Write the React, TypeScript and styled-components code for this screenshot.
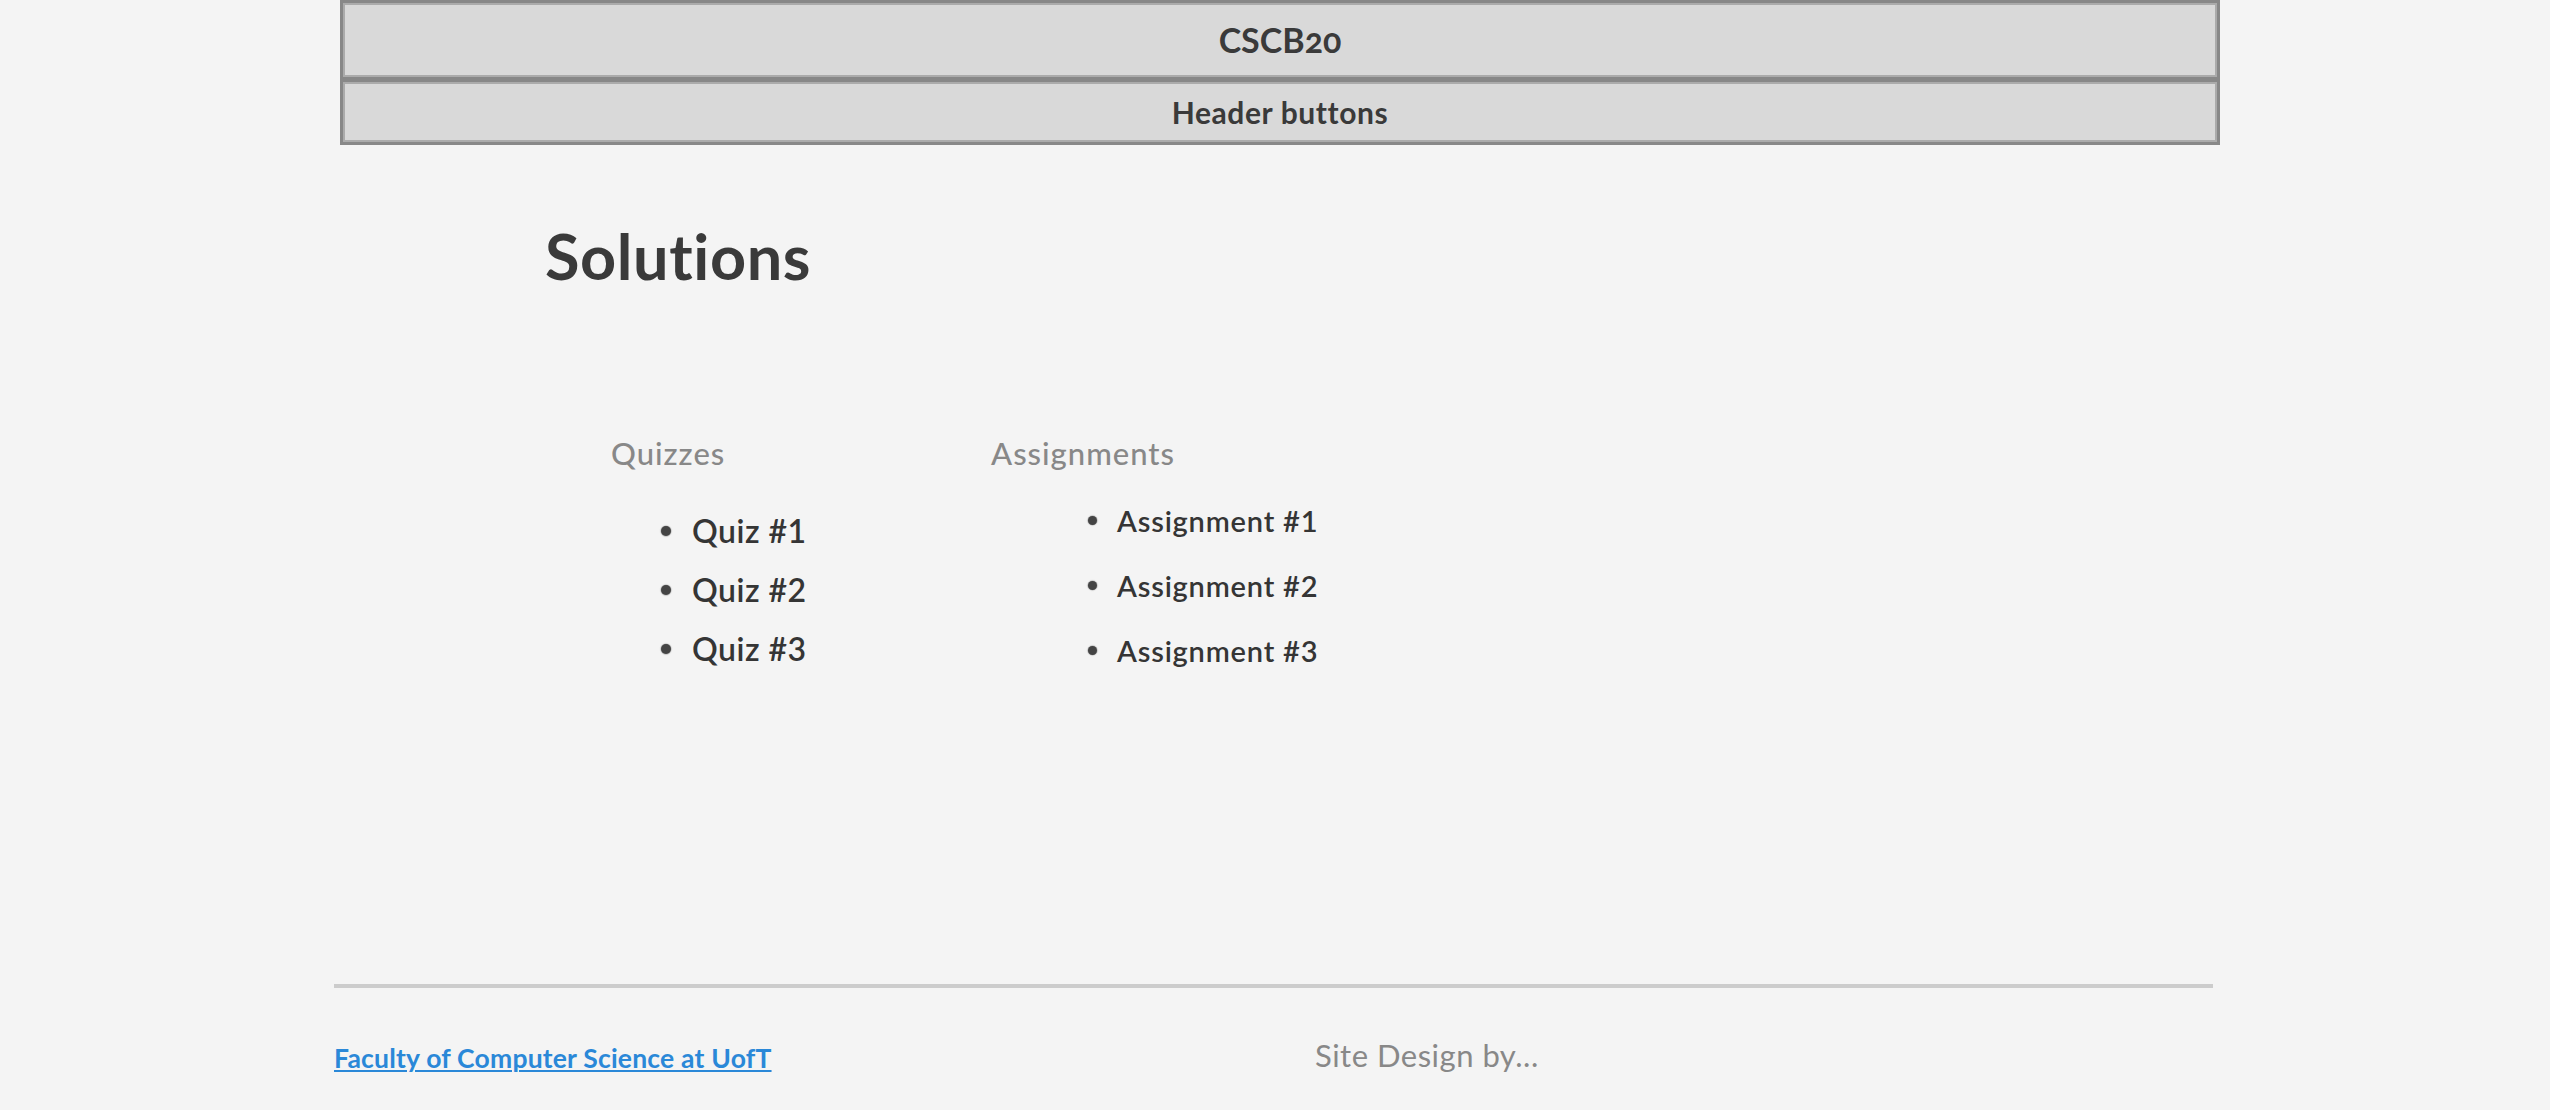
import React from "react";
import styled, { createGlobalStyle } from "styled-components";

const GlobalStyle = createGlobalStyle`
  html, body {
    margin: 0;
    padding: 0;
    background: #f4f4f4;
  }
  body {
    font-family: "Lato", "Open Sans", sans-serif;
    color: #3a3a3a;
    font-variant-ligatures: none;
  }
`;

const Page = styled.div`
  width: 2550px;
  min-height: 1110px;
  background: #f4f4f4;
  display: flex;
  flex-direction: column;
`;

const HeaderBar = styled.header`
  margin-left: 340px;
  width: 1880px;
  box-sizing: border-box;
  background: #888888;
  padding: 3px;
  display: flex;
  flex-direction: column;
  gap: 5px;
`;

const HeaderBox = styled.div<{ $h: number; $size: number; $track: number }>`
  box-sizing: border-box;
  height: ${(p) => p.$h}px;
  background: #d9d9d9;
  border: 2px solid #ababab;
  display: flex;
  align-items: center;
  justify-content: center;
  font-weight: 700;
  font-size: ${(p) => p.$size}px;
  letter-spacing: ${(p) => p.$track}px;
  line-height: 1;
  color: #3a3a3a;
  font-variant-numeric: oldstyle-nums;
`;

const Main = styled.main`
  padding-left: 545px;
  display: flex;
  flex-direction: column;
`;

const Title = styled.h1`
  margin: 73px 0 0 0;
  font-size: 63px;
  line-height: 75.6px;
  font-weight: 700;
  letter-spacing: 0.6px;
  color: #3a3a3a;
`;

const Columns = styled.div`
  margin-top: 142px;
  margin-left: 66px;
  display: grid;
  grid-template-columns: 380px auto;
  align-items: start;
`;

const Column = styled.section`
  display: flex;
  flex-direction: column;
`;

const Label = styled.h2`
  margin: 0;
  font-size: 31px;
  line-height: 34.8px;
  font-weight: 500;
  letter-spacing: 1px;
  color: #888888;
`;

const List = styled.ul<{ $indent: number; $top: number }>`
  list-style: none;
  margin: ${(p) => p.$top}px 0 0 0;
  padding: 0 0 0 ${(p) => p.$indent}px;
`;

const Item = styled.li<{ $size: number; $lh: number; $gap: number; $track: number }>`
  display: flex;
  align-items: center;
  gap: ${(p) => p.$gap}px;
  font-size: ${(p) => p.$size}px;
  line-height: ${(p) => p.$lh}px;
  height: ${(p) => p.$lh}px;
  letter-spacing: ${(p) => p.$track}px;
  font-weight: 600;
  color: #353535;
`;

const Bullet = styled.span<{ $d: number }>`
  flex: none;
  width: ${(p) => p.$d}px;
  height: ${(p) => p.$d}px;
  border-radius: 50%;
  background: #444444;
  box-shadow: 0 0 1px 0.5px rgba(68, 68, 68, 0.45);
`;

const Footer = styled.footer`
  margin-top: 301px;
  margin-left: 334px;
  width: 1879px;
  display: flex;
  flex-direction: column;
`;

const Rule = styled.div`
  height: 4px;
  background: #cccccc;
`;

const FooterRow = styled.div`
  margin-top: 49px;
  display: grid;
  grid-template-columns: 981px auto;
  align-items: start;
`;

const FooterLink = styled.a`
  margin-top: 6px;
  justify-self: start;
  font-size: 26.5px;
  line-height: 31.8px;
  font-weight: 700;
  letter-spacing: 0.2px;
  color: #2a88d8;
  text-decoration: underline;
  text-decoration-thickness: 2px;
  text-underline-offset: 2px;
`;

const Credit = styled.span`
  font-size: 31px;
  line-height: 36px;
  font-weight: 400;
  letter-spacing: 0.5px;
  color: #888888;
`;

const quizzes = ["Quiz #1", "Quiz #2", "Quiz #3"];
const assignments = ["Assignment #1", "Assignment #2", "Assignment #3"];

export default function App() {
  return (
    <>
      <GlobalStyle />
      <Page>
        <HeaderBar>
          <HeaderBox $h={74} $size={34} $track={0}>CSCB20</HeaderBox>
          <HeaderBox $h={60} $size={30} $track={0.6}>Header buttons</HeaderBox>
        </HeaderBar>
        <Main>
          <Title>Solutions</Title>
          <Columns>
            <Column>
              <Label>Quizzes</Label>
              <List $indent={50} $top={31}>
                {quizzes.map((q) => (
                  <Item key={q} $size={32} $lh={59} $gap={21} $track={0.5}>
                    <Bullet $d={10} />
                    {q}
                  </Item>
                ))}
              </List>
            </Column>
            <Column>
              <Label>Assignments</Label>
              <List $indent={97} $top={18}>
                {assignments.map((a) => (
                  <Item key={a} $size={29} $lh={65} $gap={20} $track={0.8}>
                    <Bullet $d={9} />
                    {a}
                  </Item>
                ))}
              </List>
            </Column>
          </Columns>
        </Main>
        <Footer>
          <Rule />
          <FooterRow>
            <FooterLink href="#">Faculty of Computer Science at UofT</FooterLink>
            <Credit>Site Design by...</Credit>
          </FooterRow>
        </Footer>
      </Page>
    </>
  );
}
